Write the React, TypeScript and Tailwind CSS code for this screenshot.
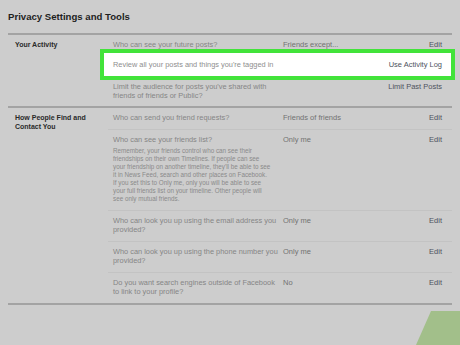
const font = { fontFamily: '"Liberation Sans", Arial, sans-serif' };

type Row = {
  question: string;
  value?: string;
  action: string;
  note?: string;
};

const activityRows: Row[] = [
  { question: "Who can see your future posts?", value: "Friends except...", action: "Edit" },
];

const findRows: Row[] = [
  { question: "Who can send you friend requests?", value: "Friends of friends", action: "Edit" },
  {
    question: "Who can see your friends list?",
    value: "Only me",
    action: "Edit",
    note: "Remember, your friends control who can see their friendships on their own Timelines. If people can see your friendship on another timeline, they'll be able to see it in News Feed, search and other places on Facebook. If you set this to Only me, only you will be able to see your full friends list on your timeline. Other people will see only mutual friends.",
  },
  { question: "Who can look you up using the email address you provided?", value: "Only me", action: "Edit" },
  { question: "Who can look you up using the phone number you provided?", value: "Only me", action: "Edit" },
  { question: "Do you want search engines outside of Facebook to link to your profile?", value: "No", action: "Edit" },
];

function SettingRow({ row, last }: { row: Row; last?: boolean }) {
  return (
    <div className={`flex pt-[5px] pb-[7px] ${last ? "" : "border-b border-[#c3c3c3]"}`}>
      <div className="w-[175px] pl-[5px] pr-[4px]">
        <div className="text-[7.4px] leading-[9px] text-[#858585]">{row.question}</div>
        {row.note && (
          <div className="mt-[3px] w-[159px] text-[6.3px] leading-[8px] text-[#8a8a8a]">{row.note}</div>
        )}
      </div>
      <div className="flex-1 text-[7.5px] leading-[9px] text-[#727272]">{row.value}</div>
      <div className="pr-[10px] text-[7.5px] leading-[9px] text-[#4e535d]">{row.action}</div>
    </div>
  );
}

export default function App() {
  return (
    <div className="relative w-[460px] h-[345px] overflow-hidden bg-[#cdcdcd]" style={font}>
      <div className="px-2">
        <h1 className="pt-[10px] h-[33px] text-[9.6px] font-bold text-[#1e1e1e]">Privacy Settings and Tools</h1>

        <section className="flex border-t-2 border-[#a3a3a3]">
          <div className="w-[100px] pl-[7px] pt-[5px] text-[7px] leading-[9px] font-bold text-[#2a2a2a]">
            Your Activity
          </div>
          <div className="flex-1">
            {activityRows.map((r) => (
              <div key={r.question} className="flex pt-[5px] h-[14px]">
                <div className="w-[175px] pl-[5px] text-[7.4px] leading-[9px] text-[#858585]">{r.question}</div>
                <div className="flex-1 text-[7.5px] leading-[9px] text-[#727272]">{r.value}</div>
                <div className="pr-[10px] text-[7.5px] leading-[9px] text-[#4e535d]">{r.action}</div>
              </div>
            ))}
            <div className="flex items-center h-[31px] ml-[-8px] mr-[-3px] border-4 border-[#42e33a] bg-white">
              <div className="flex-1 pl-[9px] text-[7.4px] leading-[9px] text-[#8e8e8e]">
                Review all your posts and things you're tagged in
              </div>
              <div className="pr-[9px] text-[7.5px] leading-[9px] text-[#4e535d]">Use Activity Log</div>
            </div>
            <div className="flex pt-[2px] pb-[6px]">
              <div className="w-[175px] pl-[5px] pr-[4px] text-[7.4px] leading-[9px] text-[#858585]">
                Limit the audience for posts you've shared with friends of friends or Public?
              </div>
              <div className="flex-1" />
              <div className="pr-[10px] text-[7.5px] leading-[9px] text-[#4e535d]">Limit Past Posts</div>
            </div>
          </div>
        </section>

        <section className="flex border-t-2 border-b-2 border-[#a3a3a3]">
          <div className="w-[100px] pl-[7px] pt-[5px] pr-[4px] text-[7px] leading-[9px] font-bold text-[#2a2a2a]">
            How People Find and Contact You
          </div>
          <div className="flex-1">
            {findRows.map((r, i) => (
              <SettingRow key={r.question} row={r} last={i === findRows.length - 1} />
            ))}
          </div>
        </section>
      </div>

      <svg className="absolute right-0 bottom-0" width="44" height="34" viewBox="0 0 44 34">
        <polygon points="15,0 44,0 44,34 0,34" fill="#a2bf8a" />
      </svg>
    </div>
  );
}
